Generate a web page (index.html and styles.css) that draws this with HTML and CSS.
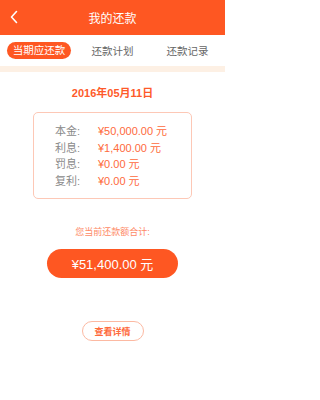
FILE: index.html
```html
<!DOCTYPE html>
<html lang="zh">
<head>
<meta charset="utf-8">
<link rel="stylesheet" href="styles.css">
</head>
<body>
<div class="page">
  <header class="topbar">
    <svg class="back" width="10" height="14" viewBox="0 0 10 14"><path d="M7.5 1.5 L2.5 7 L7.5 12.5" fill="none" stroke="#fff" stroke-width="1.6" stroke-linecap="round" stroke-linejoin="round"/></svg>
    <h1 class="title">我的还款</h1>
  </header>
  <nav class="tabs">
    <div class="tab"><span class="pill">当期应还款</span></div>
    <div class="tab"><span>还款计划</span></div>
    <div class="tab"><span>还款记录</span></div>
  </nav>
  <div class="stripe"></div>
  <main class="content">
    <div class="date">2016年05月11日</div>
    <div class="box">
      <div class="row"><span class="label">本金:</span><span class="value">¥50,000.00 元</span></div>
      <div class="row"><span class="label">利息:</span><span class="value">¥1,400.00 元</span></div>
      <div class="row"><span class="label">罚息:</span><span class="value">¥0.00 元</span></div>
      <div class="row"><span class="label">复利:</span><span class="value">¥0.00 元</span></div>
    </div>
    <div class="sum-label">您当前还款额合计:</div>
    <div class="sum">¥51,400.00 元</div>
    <div class="detail">查看详情</div>
  </main>
</div>
</body>
</html>
```

FILE: styles.css
```css
html, body {
  margin: 0;
  padding: 0;
  background: #fff;
}
body {
  font-family: "Liberation Sans", "Noto Sans CJK SC", sans-serif;
}
.page {
  width: 225px;
  min-height: 400px;
  display: flex;
  flex-direction: column;
}
.topbar {
  height: 35px;
  background: #fe5722;
  display: flex;
  align-items: center;
  justify-content: center;
  position: relative;
}
.back {
  position: absolute;
  left: 9px;
  top: 10px;
}
.title {
  margin: 0;
  font-size: 12px;
  font-weight: normal;
  color: #fff;
}
.tabs {
  height: 31px;
  display: grid;
  grid-template-columns: 1fr 1fr 1fr;
  align-items: center;
}
.tab {
  display: flex;
  justify-content: center;
  font-size: 10.5px;
  color: #666;
}
.tab .pill {
  background: #fe5722;
  color: #fff;
  height: 17px;
  line-height: 17px;
  padding: 0 6px;
  border-radius: 9px;
  margin-left: 3px;
}
.stripe {
  height: 6px;
  background: #fdf0e4;
}
.content {
  display: flex;
  flex-direction: column;
  align-items: center;
}
.date {
  margin-top: 14px;
  font-size: 11px;
  font-weight: bold;
  color: #fe5a2a;
  line-height: 14px;
}
.box {
  margin-top: 12px;
  width: 159px;
  height: 87px;
  border: 1px solid #fdc8b6;
  border-radius: 5px;
  box-sizing: border-box;
  padding: 11px 0 0 21px;
  display: flex;
  flex-direction: column;
  gap: 2.5px;
}
.row {
  display: flex;
  font-size: 11px;
  line-height: 14px;
}
.label {
  width: 43px;
  color: #8a8a8a;
}
.value {
  color: #fe6a3c;
}
.sum-label {
  margin-top: 27px;
  font-size: 9px;
  color: #fe8a66;
  line-height: 12px;
}
.sum {
  margin-top: 11px;
  width: 131px;
  height: 29px;
  border-radius: 15px;
  background: #fe5722;
  color: #fff;
  font-size: 13px;
  display: flex;
  align-items: center;
  justify-content: center;
}
.detail {
  margin-top: 43px;
  width: 62px;
  height: 20px;
  box-sizing: border-box;
  border: 1px solid #fcb9a2;
  border-radius: 10px;
  font-size: 9px;
  font-weight: bold;
  color: #fe6a3c;
  display: flex;
  align-items: center;
  justify-content: center;
}
```
